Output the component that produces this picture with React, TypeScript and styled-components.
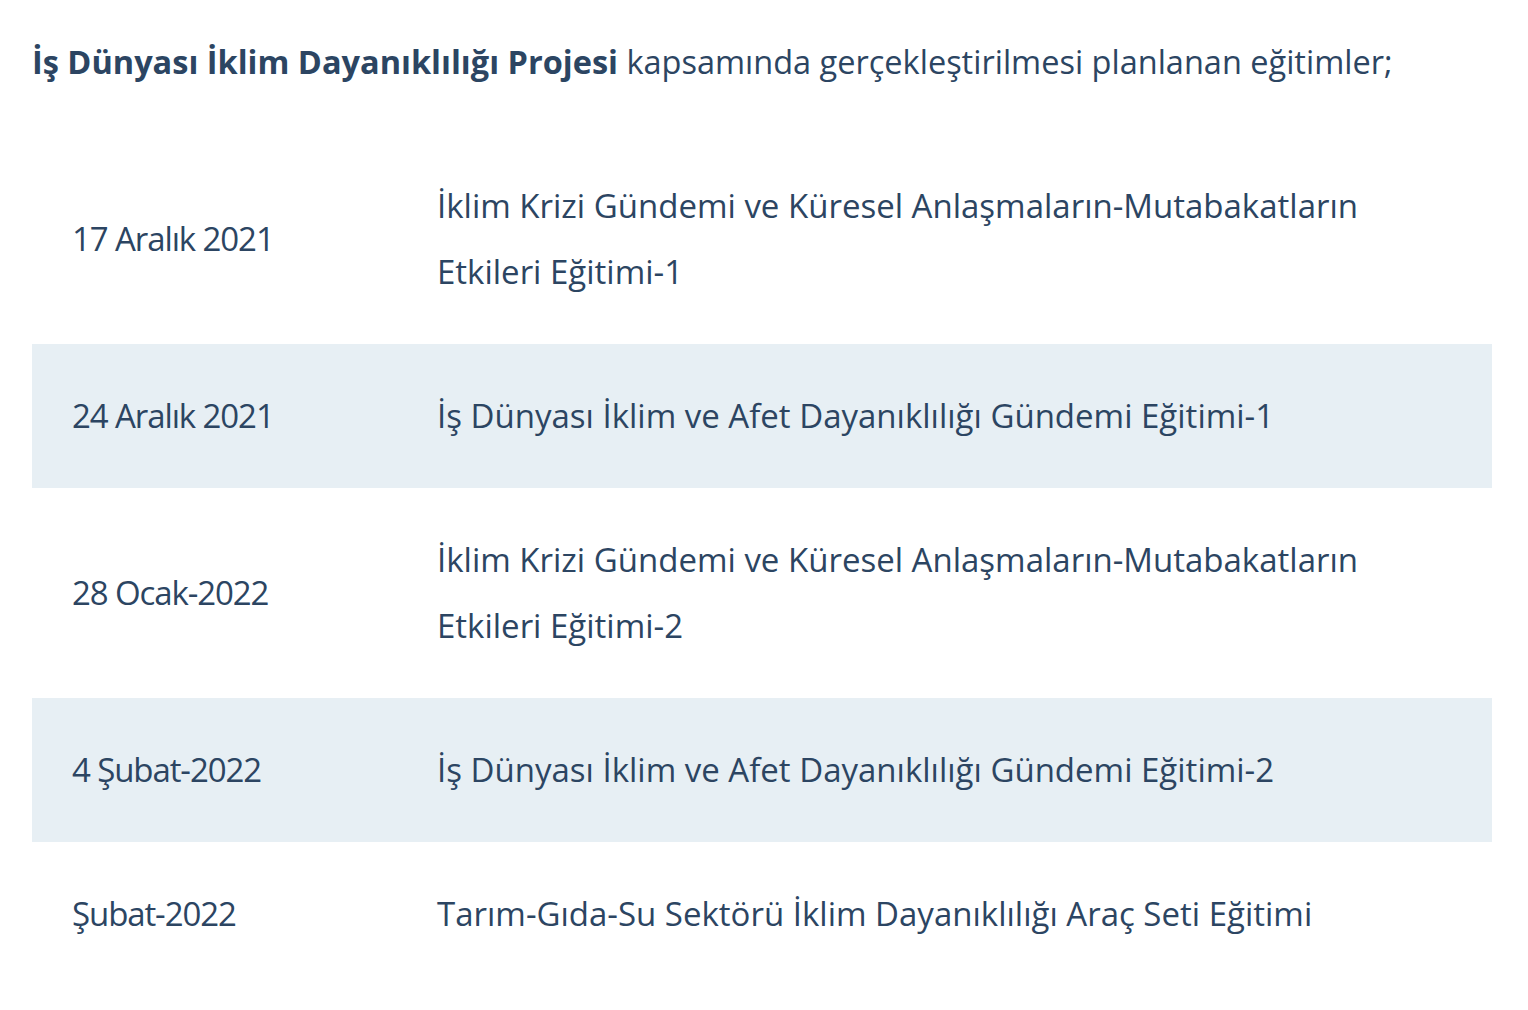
import React from "react";
import styled, { createGlobalStyle } from "styled-components";

const GlobalStyle = createGlobalStyle`
  html, body {
    margin: 0;
    padding: 0;
    background: #ffffff;
  }
  body {
    font-family: "Open Sans", "Noto Sans", sans-serif;
    color: #2c4562;
  }
`;

const Page = styled.div`
  width: 1460px;
  padding: 39px 36px 0 32px;
`;

const Intro = styled.p`
  margin: 0;
  font-size: 32.5px;
  line-height: 45px;
  color: #2c4562;
`;

const Strong = styled.strong`
  font-weight: 700;
`;

const Table = styled.table`
  width: 1460px;
  margin-top: 50px;
  border-collapse: collapse;
  table-layout: fixed;
`;

const Row = styled.tr<{ $shaded: boolean }>`
  background: ${(p) => (p.$shaded ? "#e7eff4" : "transparent")};
`;

const Cell = styled.td<{ $wide?: boolean }>`
  box-sizing: border-box;
  width: ${(p) => (p.$wide ? "auto" : "25%")};
  padding: 39px 40px;
  font-size: 33px;
  line-height: 66px;
  letter-spacing: ${(p) => (p.$wide ? "0" : "-1.1px")};
  color: #2c4562;
  vertical-align: middle;
`;

const rows: { date: string; title: string }[] = [
  {
    date: "17 Aralık 2021",
    title:
      "İklim Krizi Gündemi ve Küresel Anlaşmaların-Mutabakatların Etkileri Eğitimi-1",
  },
  {
    date: "24 Aralık 2021",
    title: "İş Dünyası İklim ve Afet Dayanıklılığı Gündemi Eğitimi-1",
  },
  {
    date: "28 Ocak-2022",
    title:
      "İklim Krizi Gündemi ve Küresel Anlaşmaların-Mutabakatların Etkileri Eğitimi-2",
  },
  {
    date: "4 Şubat-2022",
    title: "İş Dünyası İklim ve Afet Dayanıklılığı Gündemi Eğitimi-2",
  },
  {
    date: "Şubat-2022",
    title: "Tarım-Gıda-Su Sektörü İklim Dayanıklılığı Araç Seti Eğitimi",
  },
];

export default function App() {
  return (
    <>
      <GlobalStyle />
      <Page>
        <Intro>
          <Strong>İş Dünyası İklim Dayanıklılığı Projesi</Strong> kapsamında
          gerçekleştirilmesi planlanan eğitimler;
        </Intro>
        <Table>
          <tbody>
            {rows.map((r, i) => (
              <Row key={i} $shaded={i % 2 === 1}>
                <Cell>{r.date}</Cell>
                <Cell $wide>{r.title}</Cell>
              </Row>
            ))}
          </tbody>
        </Table>
      </Page>
    </>
  );
}
